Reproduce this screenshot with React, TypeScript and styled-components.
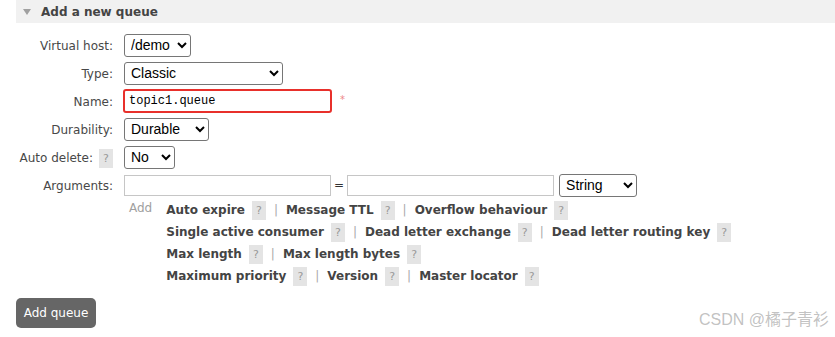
import styled, { createGlobalStyle } from "styled-components";

const Global = createGlobalStyle`
    body {
        margin: 0;
        background: #fff;
        font-family: "DejaVu Sans", Verdana, sans-serif;
        font-size: 12px;
        color: #484848;
    }
`
const Page = styled.div`
    position: relative;
    width: 835px;
    height: 337px;
    overflow: hidden;
`
const Header = styled.div`
    margin-left: 16px;
    height: 23px;
    background-color: #f1f1f1;
    display: flex;
    align-items: center;
    gap: 10px;
    padding-left: 7px;
`
const Arrow = styled.span`
    width: 0;
    height: 0;
    border-left: 4.5px solid transparent;
    border-right: 4.5px solid transparent;
    border-top: 6px solid #a0a0a0;
`
const Title = styled.h2`
    margin: 0;
    font-size: 12px;
    font-weight: bold;
    color: #444;
`
const Form = styled.div`
    display: grid;
    grid-template-columns: 113px auto;
    column-gap: 11px;
    margin-top: 8px;
`
const Label = styled.label`
    height: 28px;
    display: flex;
    align-items: center;
    justify-content: flex-end;
    gap: 6px;
    white-space: nowrap;
    padding-top: 2px;
    box-sizing: border-box;
`
const Field = styled.div<{ $gap?: number }>`
    height: 28px;
    display: flex;
    align-items: center;
    gap: ${p => p.$gap ?? 7}px;
`
const Select = styled.select<{ $w: number }>`
    width: ${p => p.$w}px;
    height: 23px;
    font-family: "Liberation Sans", Arial, sans-serif;
    font-size: 14px;
    color: #000;
    border: 1px solid #767676;
    border-radius: 3px;
    background: #fff;
    padding: 0 2px;
`
const Input = styled.input<{ $w: number }>`
    box-sizing: border-box;
    width: ${p => p.$w}px;
    height: 21px;
    border: 1px solid #c6c6c6;
    padding: 1px 4px;
    font-family: "Liberation Mono", "Courier New", monospace;
    font-size: 12px;
    color: #000;
    outline: none;
`
const NameInput = styled(Input)`
    height: 24px;
    border: 2px solid #e8302b;
    border-radius: 3px;
    margin-left: -1px;
`
const Star = styled.span`
    color: #e88;
    font-size: 10px;
    align-self: flex-start;
    margin-top: 7px;
    margin-left: 1px;
`
const Eq = styled.span`
    color: #333;
    font-size: 12px;
`
const Help = styled.span`
    display: inline-flex;
    align-items: center;
    justify-content: center;
    width: 14px;
    height: 19px;
    background-color: #e4e4e4;
    color: #999;
    font-weight: normal;
    font-size: 11px;
`
const Extras = styled.div`
    display: flex;
    gap: 14px;
    padding-left: 5px;
`
const AddLink = styled.span`
    color: #a0a0a0;
    line-height: 22px;
    margin-top: -2px;
`
const Keys = styled.div`
    display: flex;
    flex-direction: column;
`
const KeyLine = styled.div`
    height: 22px;
    display: flex;
    align-items: center;
    gap: 7px;
`
const Key = styled.span`
    font-weight: bold;
    color: #444;
    white-space: nowrap;
`
const Sep = styled.span`
    color: #aaa;
    margin: 0 1px;
`
const Button = styled.button`
    margin: 11px 0 0 16px;
    width: 80px;
    height: 30px;
    border: none;
    border-radius: 5px;
    background-color: #666;
    color: #fff;
    font-family: "DejaVu Sans", Verdana, sans-serif;
    font-size: 12px;
    padding: 0;
`
const Watermark = styled.div`
    position: absolute;
    right: 6px;
    bottom: 7px;
    font-family: "Liberation Sans", "Noto Sans CJK SC", sans-serif;
    font-size: 16px;
    color: rgba(160,160,160,0.65);
`

const lines: string[][] = [
    ["Auto expire", "Message TTL", "Overflow behaviour"],
    ["Single active consumer", "Dead letter exchange", "Dead letter routing key"],
    ["Max length", "Max length bytes"],
    ["Maximum priority", "Version", "Master locator"],
]

export default function App() {
    return (
        <Page>
            <Global />
            <Header>
                <Arrow />
                <Title>Add a new queue</Title>
            </Header>
            <Form>
                <Label>Virtual host:</Label>
                <Field>
                    <Select $w={67} defaultValue="/demo"><option>/demo</option></Select>
                </Field>
                <Label>Type:</Label>
                <Field>
                    <Select $w={159} defaultValue="Classic"><option>Classic</option><option>Quorum</option><option>Stream</option></Select>
                </Field>
                <Label>Name:</Label>
                <Field>
                    <NameInput $w={209} defaultValue="topic1.queue" />
                    <Star>*</Star>
                </Field>
                <Label>Durability:</Label>
                <Field>
                    <Select $w={85} defaultValue="Durable"><option>Durable</option><option>Transient</option></Select>
                </Field>
                <Label>Auto delete: <Help>?</Help></Label>
                <Field>
                    <Select $w={51} defaultValue="No"><option>No</option><option>Yes</option></Select>
                </Field>
                <Label>Arguments:</Label>
                <Field $gap={3}>
                    <Input $w={207} />
                    <Eq>=</Eq>
                    <Input $w={207} />
                    <Select $w={78} style={{ marginLeft: 2 }} defaultValue="String">
                        <option>String</option><option>Number</option><option>Boolean</option><option>List</option>
                    </Select>
                </Field>
                <span />
                <Extras>
                    <AddLink>Add</AddLink>
                    <Keys>
                        {lines.map((line, i) => (
                            <KeyLine key={i}>
                                {line.map((k, j) => (
                                    <KeyLine key={k}>
                                        {j > 0 && <Sep>|</Sep>}
                                        <Key>{k}</Key>
                                        <Help>?</Help>
                                    </KeyLine>
                                ))}
                            </KeyLine>
                        ))}
                    </Keys>
                </Extras>
            </Form>
            <Button>Add queue</Button>
            <Watermark>CSDN @橘子青衫</Watermark>
        </Page>
    )
}
